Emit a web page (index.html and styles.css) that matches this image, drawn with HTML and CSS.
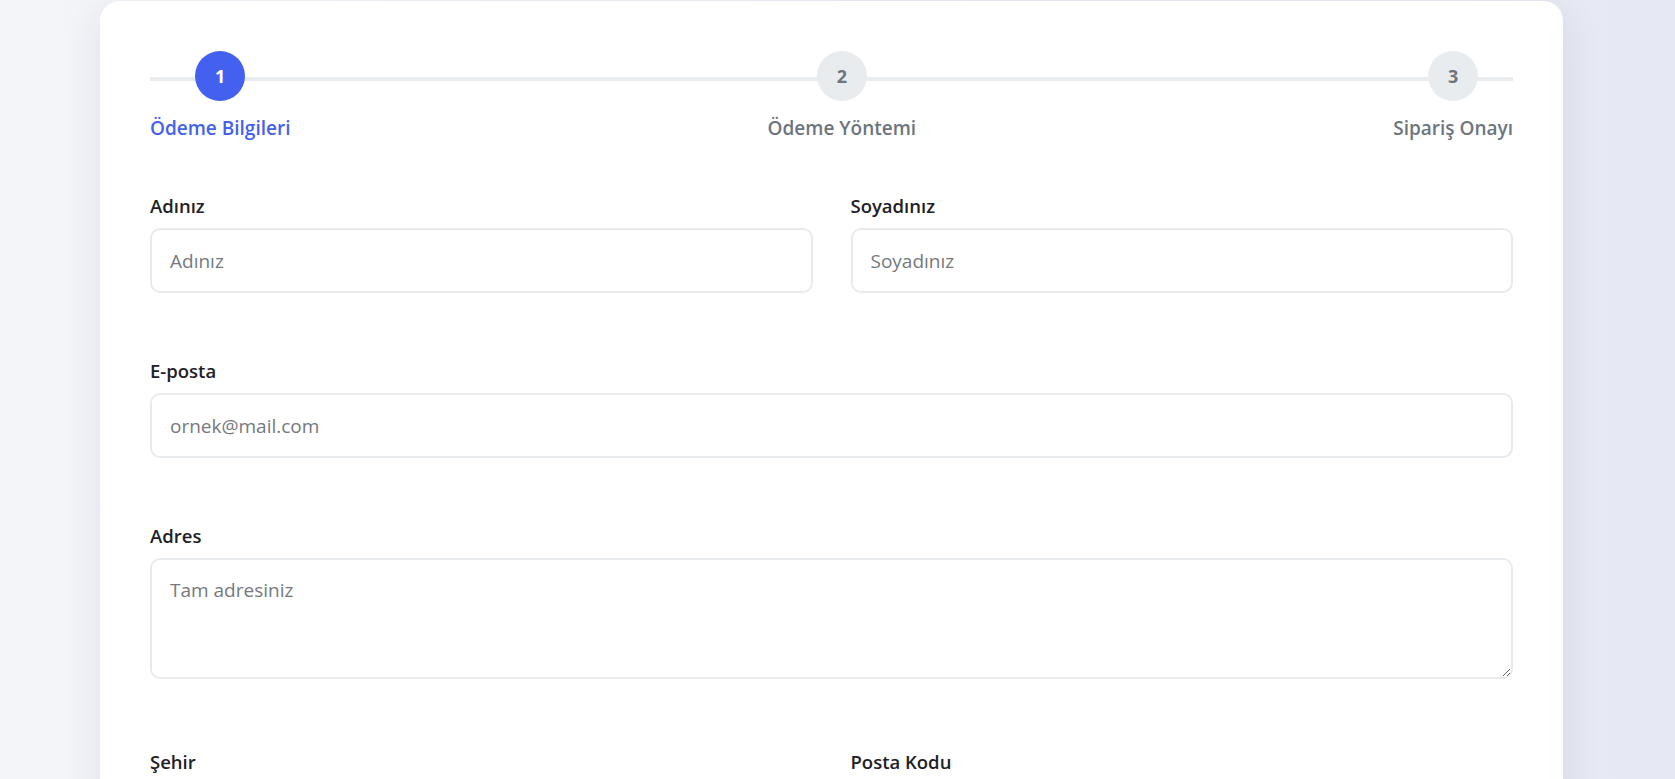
FILE: index.html
```html
<!DOCTYPE html>
<html lang="tr">
<head>
<meta charset="utf-8">
<title>Ödeme</title>
<link rel="stylesheet" href="styles.css">
</head>
<body>
<div class="page">
  <main class="card">
    <div class="steps">
      <div class="steps-line"></div>
      <div class="step active">
        <div class="step-circle">1</div>
        <div class="step-label">Ödeme Bilgileri</div>
      </div>
      <div class="step">
        <div class="step-circle">2</div>
        <div class="step-label">Ödeme Yöntemi</div>
      </div>
      <div class="step">
        <div class="step-circle">3</div>
        <div class="step-label">Sipariş Onayı</div>
      </div>
    </div>

    <form class="form">
      <div class="form-row">
        <div class="form-group">
          <label class="form-label" for="ad">Adınız</label>
          <input class="form-input" id="ad" type="text" placeholder="Adınız">
        </div>
        <div class="form-group">
          <label class="form-label" for="soyad">Soyadınız</label>
          <input class="form-input" id="soyad" type="text" placeholder="Soyadınız">
        </div>
      </div>
      <div class="form-group">
        <label class="form-label" for="eposta">E-posta</label>
        <input class="form-input" id="eposta" type="email" placeholder="ornek@mail.com">
      </div>
      <div class="form-group">
        <label class="form-label" for="adres">Adres</label>
        <textarea class="form-input form-textarea" id="adres" placeholder="Tam adresiniz"></textarea>
      </div>
      <div class="form-row">
        <div class="form-group">
          <label class="form-label" for="sehir">Şehir</label>
          <input class="form-input" id="sehir" type="text" placeholder="Şehir">
        </div>
        <div class="form-group">
          <label class="form-label" for="posta">Posta Kodu</label>
          <input class="form-input" id="posta" type="text" placeholder="Posta Kodu">
        </div>
      </div>
    </form>
  </main>
</div>
</body>
</html>
```

FILE: styles.css
```css
* {
  box-sizing: border-box;
}

html, body {
  margin: 0;
  height: 100%;
}

body {
  font-family: "Open Sans", "Noto Sans", "DejaVu Sans", sans-serif;
  background: linear-gradient(90deg, #f4f5f9 0%, #eceef5 50%, #e6e9f3 100%);
  color: #212529;
  overflow: hidden;
}

.page {
  padding: 1px 0 0 100px;
}

.card {
  width: 1463px;
  min-height: 900px;
  background: #ffffff;
  border-radius: 20px;
  box-shadow: 0 10px 40px rgba(30, 40, 80, 0.09);
  padding: 50px 50px 40px;
}

/* Stepper */
.steps {
  position: relative;
  display: flex;
  justify-content: space-between;
  margin-bottom: 53px;
}

.steps-line {
  position: absolute;
  left: 0;
  right: 0;
  top: 26px;
  height: 4px;
  background: #e9ecef;
}

.step {
  position: relative;
  display: flex;
  flex-direction: column;
  align-items: center;
}

.step-circle {
  width: 50px;
  height: 50px;
  border-radius: 50%;
  background: #e9ecef;
  color: #6c757d;
  font-weight: 700;
  font-size: 18px;
  display: flex;
  align-items: center;
  justify-content: center;
}

.step-label {
  margin-top: 15px;
  font-size: 19px;
  font-weight: 600;
  line-height: 24px;
  color: #6c757d;
  white-space: nowrap;
}

.step.active .step-circle {
  background: #4361ee;
  color: #ffffff;
}

.step.active .step-label {
  color: #4361ee;
}

/* Form */
.form-row {
  display: grid;
  grid-template-columns: 1fr 1fr;
  column-gap: 38px;
}

.form-group {
  margin-bottom: 65px;
}

.form-label {
  display: block;
  font-size: 18.5px;
  font-weight: 600;
  line-height: 25px;
  color: #1d2125;
  margin-bottom: 10px;
}

.form-input {
  width: 100%;
  height: 65px;
  border: 2px solid #e8ebee;
  border-radius: 10px;
  padding: 0 18px;
  font-family: inherit;
  font-size: 19px;
  color: #212529;
  background: #ffffff;
  outline: none;
}

.form-input::placeholder {
  color: #75797e;
}

.form-textarea {
  height: 121px;
  padding: 17px 18px;
  resize: vertical;
  line-height: 1.4;
}
```
